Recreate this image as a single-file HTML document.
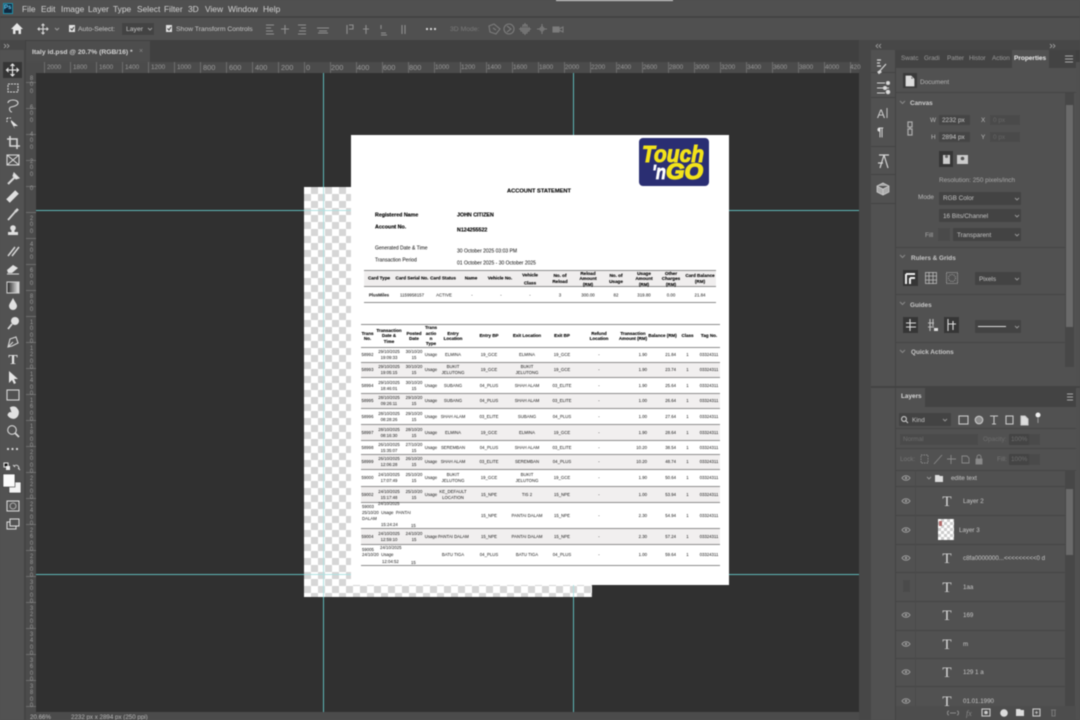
<!DOCTYPE html>
<html><head><meta charset="utf-8"><title>Photoshop</title>
<style>
html,body{margin:0;padding:0;background:#505050}
#w{position:relative;width:1080px;height:720px;overflow:hidden;background:#505050;font-family:"Liberation Sans",sans-serif;filter:blur(.4px)}
.b{position:absolute}
.t{position:absolute;white-space:nowrap;line-height:10px;color:#c4c4c4;font-size:6.4px;transform:translateY(1px)}
.mn{font-size:8.4px;color:#d2d2d2;top:2.5px}
.op{font-size:6.8px;top:24px;color:#c8c8c8}
.r{position:absolute;top:63px;font-size:6.4px;line-height:10px;color:#9a9a9a}
.v{position:absolute;left:28px;width:7px;text-align:center;font-size:6px;line-height:6.4px;color:#9a9a9a}
.sel{position:absolute;background:#434343;border-radius:1px}
.f{position:absolute;background:#454545}
.ln{position:absolute;left:896px;width:169px;height:1px;background:#454545}
.d{position:absolute;white-space:nowrap;line-height:10px;color:#000;font-size:5px;transform:translateY(1.5px)}
.db{font-weight:bold;color:#000;font-size:5.3px;-webkit-text-stroke:.12px #000}
.c{position:absolute;white-space:nowrap;transform:translate(-50%,calc(-50% + 1px));text-align:center;color:#111;font-size:4.4px;line-height:5.4px}
.h{font-weight:bold;color:#000;font-size:4.6px;-webkit-text-stroke:.1px #000}
table{position:absolute;left:361px;top:324px;width:359px;border-collapse:separate;border-spacing:0;table-layout:fixed;font-size:4.3px;line-height:6px;color:#111}
td,th{padding:0;text-align:center;vertical-align:middle;box-sizing:border-box;border-bottom:1px solid #8d8d8d;overflow:visible;white-space:nowrap;font-weight:normal}
th{font-weight:bold;color:#000;font-size:4.5px;line-height:5.4px;border-top:1px solid #8d8d8d;-webkit-text-stroke:.1px #000}
tr:nth-child(odd) td{background:#f1efef}
.a{text-align:right;padding-right:1px}
.o{position:absolute;white-space:nowrap;font-size:4.3px;line-height:6px;color:#111}
.ly{font-size:6.2px;color:#c8c8c8;left:963px}
</style></head><body>
<div id="w">

<!-- top chrome -->
<div class="b" style="left:556px;top:0;width:117px;height:1px;background:#ddd"></div>
<div class="b" style="left:0;top:16px;width:1080px;height:2px;background:#444"></div>
<div class="b" style="left:0;top:40px;width:1080px;height:22px;background:#404040"></div>
<div class="b" style="left:0;top:40px;width:25px;height:10px;background:#474747"></div>
<div class="b" style="left:859px;top:40px;width:221px;height:10px;background:#474747"></div>
<div class="b" style="left:859px;top:50px;width:12px;height:670px;background:#474747"></div>
<div class="b" style="left:26px;top:41px;width:124px;height:21px;background:#4d4d4d"></div>
<div class="b" style="left:0;top:50px;width:24px;height:670px;background:#525252"></div>
<div class="b" style="left:24px;top:50px;width:2px;height:670px;background:#444"></div>

<div class="b" style="left:3px;top:3px;width:8px;height:9px;background:#10293f;border:1px solid #1f8fa8"></div>
<div class="t" style="left:4px;top:2px;font-size:6px;font-weight:bold;color:#5fc6ee">Ps</div>
<div class="t mn" style="left:22px">File</div>
<div class="t mn" style="left:41px">Edit</div>
<div class="t mn" style="left:61px">Image</div>
<div class="t mn" style="left:88px">Layer</div>
<div class="t mn" style="left:113px">Type</div>
<div class="t mn" style="left:137px">Select</div>
<div class="t mn" style="left:164px">Filter</div>
<div class="t mn" style="left:188px">3D</div>
<div class="t mn" style="left:205px">View</div>
<div class="t mn" style="left:228px">Window</div>
<div class="t mn" style="left:263px">Help</div>

<!-- options bar -->
<div class="t op" style="left:78px">Auto-Select:</div>
<div class="sel" style="left:122px;top:23px;width:32px;height:12px"></div>
<div class="t op" style="left:126px">Layer</div>
<div class="t op" style="left:176px">Show Transform Controls</div>
<div class="t op" style="left:450px;color:#7a7a7a">3D Mode:</div>
<div class="t" style="left:32px;top:46.5px;font-size:6.8px;font-weight:bold;color:#d4d4d4">Italy id.psd @ 20.7% (RGB/16) *</div>
<div class="t" style="left:139px;top:46px;font-size:7px;color:#888">×</div>

<!-- rulers -->
<div class="b" style="left:36px;top:62px;width:823px;height:11px;background:#4b4b4b linear-gradient(to right,#6e6e6e 1px,transparent 1px) 8px 0/26px 100%"></div>
<div class="b" style="left:26px;top:62px;width:10px;height:658px;background:#4b4b4b linear-gradient(to bottom,#6e6e6e 1px,transparent 1px) 0 20px/100% 26px"></div>
<span class="r" style="left:47px">2000</span><span class="r" style="left:73px">1800</span><span class="r" style="left:99px">1600</span><span class="r" style="left:125px">1400</span><span class="r" style="left:151px">1200</span><span class="r" style="left:177px">1000</span><span class="r" style="left:203px;font-size:7.4px">800</span><span class="r" style="left:229px;font-size:7.4px">600</span><span class="r" style="left:255px;font-size:7.4px">400</span><span class="r" style="left:281px;font-size:7.4px">200</span><span class="r" style="left:306px;font-size:7.4px">0</span><span class="r" style="left:331px;font-size:7.4px">200</span><span class="r" style="left:357px;font-size:7.4px">400</span><span class="r" style="left:383px;font-size:7.4px">600</span><span class="r" style="left:409px;font-size:7.4px">800</span><span class="r" style="left:435px">1000</span><span class="r" style="left:461px">1200</span><span class="r" style="left:487px">1400</span><span class="r" style="left:513px">1600</span><span class="r" style="left:539px">1800</span><span class="r" style="left:565px">2000</span><span class="r" style="left:591px">2200</span><span class="r" style="left:617px">2400</span><span class="r" style="left:643px">2600</span><span class="r" style="left:669px">2800</span><span class="r" style="left:695px">3000</span><span class="r" style="left:721px">3200</span><span class="r" style="left:747px">3400</span><span class="r" style="left:773px">3600</span><span class="r" style="left:799px">3800</span><span class="r" style="left:825px">4000</span><span class="r" style="left:850px">420</span>
<div class="v" style="top:76px">8<br>0<br>0</div><div class="v" style="top:105px">6<br>0<br>0</div><div class="v" style="top:132px">4<br>0<br>0</div><div class="v" style="top:159px">2<br>0<br>0</div><div class="v" style="top:186px">0</div><div class="v" style="top:216px">2<br>0<br>0</div><div class="v" style="top:242px">4<br>0<br>0</div><div class="v" style="top:268px">6<br>0<br>0</div><div class="v" style="top:294px">8<br>0<br>0</div><div class="v" style="top:320px">1<br>0<br>0<br>0</div><div class="v" style="top:346px">1<br>2<br>0<br>0</div><div class="v" style="top:372px">1<br>4<br>0<br>0</div><div class="v" style="top:398px">1<br>6<br>0<br>0</div><div class="v" style="top:424px">1<br>8<br>0<br>0</div><div class="v" style="top:450px">2<br>0<br>0<br>0</div><div class="v" style="top:476px">2<br>2<br>0<br>0</div><div class="v" style="top:502px">2<br>4<br>0<br>0</div><div class="v" style="top:528px">2<br>6<br>0<br>0</div><div class="v" style="top:554px">2<br>8<br>0<br>0</div><div class="v" style="top:580px">3<br>0<br>0<br>0</div><div class="v" style="top:606px">3<br>2<br>0<br>0</div><div class="v" style="top:632px">3<br>4<br>0<br>0</div><div class="v" style="top:658px">3<br>6<br>0<br>0</div><div class="v" style="top:684px">3<br>8<br>0<br>0</div>

<!-- canvas -->
<div class="b" style="left:36px;top:73px;width:823px;height:639px;background:#303030"></div>
<!-- guides -->
<div class="b" style="left:323px;top:73px;width:1px;height:639px;background:#5fb8b8"></div>
<div class="b" style="left:573px;top:73px;width:1px;height:639px;background:#5fb8b8"></div>
<div class="b" style="left:36px;top:210px;width:823px;height:1px;background:#5fb8b8"></div>
<div class="b" style="left:36px;top:574px;width:823px;height:1px;background:#5fb8b8"></div>
<!-- transparent checker with pale guides on top -->
<div class="b" style="left:304px;top:187px;width:288px;height:410px;background:#fff conic-gradient(#d6d6d6 25%,#fff 0 50%,#d6d6d6 0 75%,#fff 0) 0 0/14px 14px"></div>
<div class="b" style="left:323px;top:187px;width:1px;height:410px;background:#b0e2e2"></div>
<div class="b" style="left:573px;top:585px;width:1px;height:12px;background:#b0e2e2"></div>
<div class="b" style="left:304px;top:210px;width:47px;height:1px;background:#b0e2e2"></div>
<div class="b" style="left:304px;top:574px;width:47px;height:1px;background:#b0e2e2"></div>
<!-- document -->
<div class="b" style="left:351px;top:135px;width:378px;height:450px;background:#fff"></div>

<svg class="b" style="left:639px;top:138px" width="70" height="48" viewBox="0 0 70 48">
<rect width="70" height="48" rx="4" fill="#2a2e72"/>
<text x="3" y="24" font-family="Liberation Sans" font-weight="bold" font-style="italic" font-size="23" fill="#f3e31a" stroke="#f3e31a" stroke-width="1" textLength="62" lengthAdjust="spacingAndGlyphs">Touch</text>
<text x="13" y="41" font-family="Liberation Sans" font-weight="bold" font-style="italic" font-size="20" fill="#fff" stroke="#fff" stroke-width=".7" textLength="14" lengthAdjust="spacingAndGlyphs">'n</text>
<text x="27" y="41" font-family="Liberation Sans" font-weight="bold" font-style="italic" font-size="22" fill="#f3e31a" stroke="#f3e31a" stroke-width="1.300" textLength="37" lengthAdjust="spacingAndGlyphs">GO</text>
</svg>

<div class="c h" style="left:539px;top:190.5px;font-size:5.7px">ACCOUNT STATEMENT</div>
<div class="d db" style="left:375px;top:209px">Registered Name</div>
<div class="d db" style="left:457px;top:209px">JOHN CITIZEN</div>
<div class="d db" style="left:375px;top:221px">Account No.</div>
<div class="d db" style="left:457px;top:224px">N124255522</div>
<div class="d" style="left:375px;top:242px">Generated Date &amp; Time</div>
<div class="d" style="left:457px;top:245px">30 October 2025 03:03 PM</div>
<div class="d" style="left:375px;top:254px">Transaction Period</div>
<div class="d" style="left:457px;top:257px">01 October 2025 - 30 October 2025</div>

<div class="b" style="left:364px;top:270px;width:352px;height:17px;background:#f0eeee;border-top:1px solid #8d8d8d;border-bottom:1px solid #8d8d8d;box-sizing:border-box"></div>
<div class="b" style="left:364px;top:302px;width:352px;height:1px;background:#8d8d8d"></div>
<div class="c h" style="left:379px;top:277px">Card Type</div>
<div class="c h" style="left:412px;top:277px">Card Serial No.</div>
<div class="c h" style="left:443px;top:277px">Card Status</div>
<div class="c h" style="left:471px;top:277px">Name</div>
<div class="c h" style="left:500px;top:277px">Vehicle No.</div>
<div class="c h" style="left:530px;top:278px;line-height:7.5px">Vehicle<br>Class</div>
<div class="c h" style="left:560px;top:278px;line-height:6px">No. of<br>Reload</div>
<div class="c h" style="left:588px;top:278px">Reload<br>Amount<br>(RM)</div>
<div class="c h" style="left:616px;top:278px;line-height:6px">No. of<br>Usage</div>
<div class="c h" style="left:644px;top:278px">Usage<br>Amount<br>(RM)</div>
<div class="c h" style="left:671px;top:278px">Other<br>Charges<br>(RM)</div>
<div class="c h" style="left:700px;top:278px;line-height:6px">Card Balance<br>(RM)</div>
<div class="c" style="left:379px;top:294px;font-weight:bold">PlusMiles</div>
<div class="c" style="left:412px;top:294px">1159958157</div>
<div class="c" style="left:444px;top:294px">ACTIVE</div>
<div class="c" style="left:472px;top:294px">-</div>
<div class="c" style="left:501px;top:294px">-</div>
<div class="c" style="left:530px;top:294px">-</div>
<div class="c" style="left:560px;top:294px">3</div>
<div class="c" style="left:588px;top:294px">300.00</div>
<div class="c" style="left:616px;top:294px">82</div>
<div class="c" style="left:644px;top:294px">319.80</div>
<div class="c" style="left:671px;top:294px">0.00</div>
<div class="c" style="left:700px;top:294px">21.84</div>

<table>
<colgroup><col style="width:13px"><col style="width:30px"><col style="width:20px"><col style="width:14px"><col style="width:30px"><col style="width:42px"><col style="width:34px"><col style="width:36px"><col style="width:38px"><col style="width:30px"><col style="width:29px"><col style="width:21px"><col style="width:22px"></colgroup>
<tr style="height:24px"><th>Trans<br>No.</th><th>Transaction<br>Date &amp;<br>Time</th><th>Posted<br>Date</th><th>Trans<br>actio<br>n<br>Type</th><th>Entry<br>Location</th><th>Entry BP</th><th>Exit Location</th><th>Exit BP</th><th>Refund<br>Location</th><th>Transaction<br>Amount (RM)</th><th>Balance (RM)</th><th>Class</th><th>Tag No.</th></tr>
<tr style="height:15px"><td>58992</td><td>29/10/2025<br>19:09:33</td><td>30/10/20<br>15</td><td>Usage</td><td>ELMINA</td><td>19_GCE</td><td>ELMINA</td><td>19_GCE</td><td>-</td><td class="a">1.90</td><td class="a">21.84</td><td>1</td><td>03324311</td></tr>
<tr style="height:15px"><td>58993</td><td>29/10/2025<br>19:05:15</td><td>30/10/20<br>15</td><td>Usage</td><td>BUKIT<br>JELUTONG</td><td>19_GCE</td><td>BUKIT<br>JELUTONG</td><td>19_GCE</td><td>-</td><td class="a">1.90</td><td class="a">23.74</td><td>1</td><td>03324311</td></tr>
<tr style="height:16px"><td>58994</td><td>29/10/2025<br>18:46:01</td><td>30/10/20<br>15</td><td>Usage</td><td>SUBANG</td><td>04_PLUS</td><td>SHAH ALAM</td><td>03_ELITE</td><td>-</td><td class="a">1.90</td><td class="a">25.64</td><td>1</td><td>03324311</td></tr>
<tr style="height:15px"><td>58995</td><td>28/10/2025<br>09:26:11</td><td>29/10/20<br>15</td><td>Usage</td><td>SUBANG</td><td>04_PLUS</td><td>SHAH ALAM</td><td>03_ELITE</td><td>-</td><td class="a">1.00</td><td class="a">26.64</td><td>1</td><td>03324311</td></tr>
<tr style="height:16px"><td>58996</td><td>28/10/2025<br>08:28:26</td><td>29/10/20<br>15</td><td>Usage</td><td>SHAH ALAM</td><td>03_ELITE</td><td>SUBANG</td><td>04_PLUS</td><td>-</td><td class="a">1.00</td><td class="a">27.64</td><td>1</td><td>03324311</td></tr>
<tr style="height:16px"><td>58997</td><td>28/10/2025<br>08:16:30</td><td>28/10/20<br>15</td><td>Usage</td><td>ELMINA</td><td>19_GCE</td><td>ELMINA</td><td>19_GCE</td><td>-</td><td class="a">1.90</td><td class="a">28.64</td><td>1</td><td>03324311</td></tr>
<tr style="height:14px"><td>58998</td><td>26/10/2025<br>15:35:07</td><td>27/10/20<br>15</td><td>Usage</td><td>SEREMBAN</td><td>04_PLUS</td><td>SHAH ALAM</td><td>03_ELITE</td><td>-</td><td class="a">10.20</td><td class="a">38.54</td><td>1</td><td>03324311</td></tr>
<tr style="height:15px"><td>58999</td><td>26/10/2025<br>12:06:28</td><td>26/10/20<br>15</td><td>Usage</td><td>SHAH ALAM</td><td>03_ELITE</td><td>SEREMBAN</td><td>04_PLUS</td><td>-</td><td class="a">10.20</td><td class="a">48.74</td><td>1</td><td>03324311</td></tr>
<tr style="height:17px"><td>59000</td><td>24/10/2025<br>17:07:49</td><td>25/10/20<br>15</td><td>Usage</td><td>BUKIT<br>JELUTONG</td><td>19_GCE</td><td>BUKIT<br>JELUTONG</td><td>19_GCE</td><td>-</td><td class="a">1.90</td><td class="a">50.64</td><td>1</td><td>03324311</td></tr>
<tr style="height:16px"><td>59002</td><td>24/10/2025<br>15:17:48</td><td>25/10/20<br>15</td><td>Usage</td><td>KE_DEFAULT<br>LOCATION</td><td>15_NPE</td><td>TIS 2</td><td>15_NPE</td><td>-</td><td class="a">1.00</td><td class="a">53.94</td><td>1</td><td>03324311</td></tr>
<tr style="height:26px"><td colspan="5"></td><td>15_NPE</td><td>PANTAI DALAM</td><td>15_NPE</td><td>-</td><td class="a">2.30</td><td class="a">54.94</td><td>1</td><td>03324311</td></tr>
<tr style="height:16px"><td>59004</td><td>24/10/2025<br>12:59:10</td><td>24/10/20<br>15</td><td>Usage</td><td>PANTAI DALAM</td><td>15_NPE</td><td>PANTAI DALAM</td><td>15_NPE</td><td>-</td><td class="a">2.30</td><td class="a">57.24</td><td>1</td><td>03324311</td></tr>
<tr style="height:21px"><td colspan="4"></td><td>BATU TIGA</td><td>04_PLUS</td><td>BATU TIGA</td><td>04_PLUS</td><td>-</td><td class="a">1.00</td><td class="a">59.64</td><td>1</td><td>03324311</td></tr>
</table>
<div class="o" style="left:362px;top:504px">59003</div>
<div class="o" style="left:378px;top:501px">24/10/2025</div>
<div class="o" style="left:362px;top:510px">25/10/20 &nbsp;Usage &nbsp;PANTAI</div>
<div class="o" style="left:362px;top:516px">DALAM</div>
<div class="o" style="left:381px;top:522px">15:24:24</div>
<div class="o" style="left:411px;top:523px">15</div>
<div class="o" style="left:362px;top:547px">59005</div>
<div class="o" style="left:380px;top:545px">24/10/2025</div>
<div class="o" style="left:362px;top:552px">24/10/20 &nbsp;Usage</div>
<div class="o" style="left:382px;top:559px">12:04:52</div>
<div class="o" style="left:411px;top:560px">15</div>

<!-- status -->
<div class="b" style="left:26px;top:712px;width:833px;height:8px;background:#4b4b4b"></div>
<div class="t" style="left:30px;top:712px;font-size:6.2px;color:#bbb">20.66%</div>
<div class="t" style="left:71px;top:712px;font-size:6.2px;color:#bbb">2232 px x 2894 px (250 ppi)</div>

<!-- right strip -->
<div class="b" style="left:871px;top:50px;width:24px;height:670px;background:#515151"></div>
<div class="b" style="left:895px;top:50px;width:181px;height:336px;background:#515151"></div>
<div class="b" style="left:895px;top:50px;width:1px;height:670px;background:#434343"></div>
<div class="b" style="left:895px;top:50px;width:181px;height:18px;background:#434343"></div>
<div class="b" style="left:1012px;top:50px;width:37px;height:18px;background:#515151"></div>
<div class="b" style="left:871px;top:72px;width:24px;height:1px;background:#444"></div>
<div class="b" style="left:871px;top:97px;width:24px;height:1px;background:#444"></div>
<div class="b" style="left:871px;top:146px;width:24px;height:1px;background:#444"></div>
<div class="b" style="left:871px;top:174px;width:24px;height:1px;background:#444"></div>
<div class="b" style="left:871px;top:203px;width:24px;height:1px;background:#444"></div>
<div class="t" style="left:901px;top:53px;color:#9c9c9c">Swatc</div>
<div class="t" style="left:924px;top:53px;color:#9c9c9c">Gradi</div>
<div class="t" style="left:947px;top:53px;color:#9c9c9c">Patter</div>
<div class="t" style="left:969px;top:53px;color:#9c9c9c">Histor</div>
<div class="t" style="left:992px;top:53px;color:#9c9c9c">Action</div>
<div class="t" style="left:1014px;top:53px;color:#eee;font-weight:bold;font-size:6.5px">Properties</div>
<div class="b" style="left:903px;top:73px;width:14px;height:15px;background:#3a3a3a"></div>
<div class="t" style="left:920px;top:77px;color:#b4b4b4">Document</div>
<div class="ln" style="top:92px;width:180px"></div>
<div class="t" style="left:910px;top:98px;font-weight:bold;color:#d0d0d0">Canvas</div>
<div class="t" style="left:930px;top:115px;color:#bbb">W</div>
<div class="f" style="left:939px;top:115px;width:31px;height:10px"></div>
<div class="t" style="left:942px;top:115px;color:#ccc">2232 px</div>
<div class="t" style="left:981px;top:115px;color:#bbb">X</div>
<div class="f" style="left:990px;top:115px;width:30px;height:10px;background:#4a4a4a"></div>
<div class="t" style="left:993px;top:115px;color:#666">0 px</div>
<div class="t" style="left:931px;top:132px;color:#bbb">H</div>
<div class="f" style="left:939px;top:132px;width:31px;height:10px"></div>
<div class="t" style="left:942px;top:132px;color:#ccc">2894 px</div>
<div class="t" style="left:981px;top:132px;color:#bbb">Y</div>
<div class="f" style="left:990px;top:132px;width:30px;height:10px;background:#4a4a4a"></div>
<div class="t" style="left:993px;top:132px;color:#666">0 px</div>
<div class="b" style="left:939px;top:151px;width:14px;height:16px;background:#363636"></div>
<div class="t" style="left:939px;top:175px;color:#aaa">Resolution: 250 pixels/inch</div>
<div class="t" style="left:918px;top:192px;color:#bbb">Mode</div>
<div class="sel" style="left:939px;top:192px;width:82px;height:13px"></div>
<div class="t" style="left:943px;top:193px;color:#c4c4c4">RGB Color</div>
<div class="sel" style="left:939px;top:209px;width:82px;height:13px"></div>
<div class="t" style="left:943px;top:211px;color:#c4c4c4">16 Bits/Channel</div>
<div class="t" style="left:925px;top:230px;color:#aaa">Fill</div>
<div class="b" style="left:938px;top:228px;width:12px;height:13px;background:#4a4a4a"></div>
<div class="sel" style="left:953px;top:228px;width:68px;height:13px"></div>
<div class="t" style="left:957px;top:230px;color:#c4c4c4">Transparent</div>
<div class="ln" style="top:247px"></div>
<div class="t" style="left:911px;top:253px;font-weight:bold;color:#c8c8c8">Rulers &amp; Grids</div>
<div class="b" style="left:903px;top:270px;width:15px;height:16px;background:#363636"></div>
<div class="sel" style="left:975px;top:272px;width:46px;height:13px"></div>
<div class="t" style="left:979px;top:274px;color:#c4c4c4">Pixels</div>
<div class="ln" style="top:294px"></div>
<div class="t" style="left:910px;top:300px;font-weight:bold;color:#c8c8c8">Guides</div>
<div class="b" style="left:903px;top:317px;width:15px;height:16px;background:#363636"></div>
<div class="b" style="left:944px;top:317px;width:15px;height:16px;background:#363636"></div>
<div class="sel" style="left:975px;top:320px;width:46px;height:13px"></div>
<div class="b" style="left:978px;top:326px;width:28px;height:1px;background:#ddd"></div>
<div class="ln" style="top:342px"></div>
<div class="t" style="left:911px;top:347px;font-weight:bold;color:#c8c8c8">Quick Actions</div>
<!-- props scrollbar -->
<div class="b" style="left:1065px;top:93px;width:9px;height:274px;background:#474747"></div>
<div class="b" style="left:1066px;top:105px;width:7px;height:222px;background:#6a6a6a"></div>

<!-- layers panel -->
<div class="b" style="left:871px;top:386px;width:209px;height:2px;background:#434343"></div>
<div class="b" style="left:895px;top:388px;width:181px;height:332px;background:#515151"></div>
<div class="b" style="left:895px;top:388px;width:1px;height:332px;background:#434343"></div>
<div class="b" style="left:925px;top:388px;width:151px;height:19px;background:#434343"></div>
<div class="t" style="left:901px;top:391px;font-weight:bold;color:#d8d8d8">Layers</div>
<div class="sel" style="left:899px;top:413px;width:52px;height:13px"></div>
<div class="t" style="left:912px;top:415px;color:#c4c4c4">Kind</div>
<div class="ln" style="top:428px;width:180px"></div>
<div class="b" style="left:900px;top:434px;width:78px;height:11px;background:#4a4a4a"></div>
<div class="t" style="left:903px;top:434px;color:#6e6e6e">Normal</div>
<div class="t" style="left:983px;top:434px;color:#6e6e6e">Opacity:</div>
<div class="b" style="left:1009px;top:434px;width:31px;height:11px;background:#4a4a4a"></div>
<div class="b" style="left:1009px;top:434px;width:20px;height:11px;background:#444"></div>
<div class="t" style="left:1011px;top:434px;color:#6e6e6e">100%</div>
<div class="ln" style="top:448px;width:180px"></div>
<div class="t" style="left:900px;top:454px;color:#777">Lock:</div>
<div class="t" style="left:997px;top:454px;color:#777">Fill:</div>
<div class="b" style="left:1009px;top:454px;width:31px;height:11px;background:#4a4a4a"></div>
<div class="b" style="left:1009px;top:454px;width:20px;height:11px;background:#444"></div>
<div class="t" style="left:1011px;top:454px;color:#6e6e6e">100%</div>
<div class="ln" style="top:470px;width:180px"></div>
<div class="ln" style="top:486px"></div><div class="ln" style="top:515px"></div><div class="ln" style="top:544px"></div><div class="ln" style="top:572px"></div><div class="ln" style="top:601px"></div><div class="ln" style="top:630px"></div><div class="ln" style="top:658px"></div><div class="ln" style="top:686px"></div>
<div class="b" style="left:915px;top:470px;width:1px;height:236px;background:#4a4a4a"></div>
<div class="b" style="left:903px;top:580px;width:7px;height:12px;background:#4a4a4a"></div>
<div class="t" style="left:951px;top:473px;color:#c8c8c8">edite text</div>
<div class="t ly" style="top:496px">Layer 2</div>
<div class="t ly" style="left:959px;top:525px">Layer 3</div>
<div class="t ly" style="top:553px">c8fa0000000...&lt;&lt;&lt;&lt;&lt;&lt;&lt;&lt;&lt;0 d</div>
<div class="t ly" style="top:582px">1aa</div>
<div class="t ly" style="top:610px">169</div>
<div class="t ly" style="top:639px">m</div>
<div class="t ly" style="top:667px">129 1 a</div>
<div class="t ly" style="top:696px">01.01.1990</div>
<div class="b" style="left:938px;top:519px;width:16px;height:21px;background:#fff conic-gradient(#ccc 25%,#fff 0 50%,#ccc 0 75%,#fff 0) 0 0/6px 6px"></div>
<div class="b" style="left:939px;top:521px;width:3px;height:5px;background:#b06a6a"></div>
<div class="b" style="left:1065px;top:470px;width:10px;height:236px;background:#474747"></div>
<div class="b" style="left:1066px;top:489px;width:7px;height:66px;background:#6a6a6a"></div>
<div class="b" style="left:896px;top:706px;width:180px;height:14px;background:#4d4d4d"></div>

<!-- icons -->
<svg class="b" style="left:0;top:0" width="1080" height="720" viewBox="0 0 1080 720" fill="none" stroke="#d6d6d6" stroke-width="1.1">
<rect x="3" y="62" width="19" height="16" fill="#363636" stroke="none"/>
<!-- options -->
<path d="M11 29L17 23L23 29H21V34H18.500V30.500H15.500V34H13V29Z" fill="#e6e6e6" stroke="none"/>
<g transform="translate(43 29)"><path d="M0-5V5M-5 0H5M-1.500-3.500L0-5L1.500-3.500M-1.500 3.500L0 5L1.500 3.500M-3.500-1.500L-5 0L-3.500 1.500M3.500-1.500L5 0L3.500 1.500"/></g>
<path d="M55 28L57 30L59 28" stroke="#999"/>
<rect x="69" y="25" width="6" height="7" fill="#e0e0e0" stroke="none"/><path d="M70.500 28.500L72 30L74 27" stroke="#444"/>
<rect x="166" y="25" width="6" height="7" fill="#e0e0e0" stroke="none"/><path d="M167.500 28.500L169 30L171 27" stroke="#444"/>
<path d="M148 28L150 30L152 28" stroke="#999"/>
<path d="M266 25H274M266 28H271M266 31H273M266 34H274M281 29H289M285 25V34M298 25H306M301 28H306M299 31H306M298 34H306M317 28H329M319 31H327M318 33H328" stroke="#8f8f8f"/>
<path d="M347 25V34M349 25H353V29H349M363 29H369M366 25V34M381 33H386M381 25V29M381 35H387M402 25V34M405 25V34" stroke="#8f8f8f"/>
<circle cx="427" cy="29" r="1.100" fill="#ddd" stroke="none"/><circle cx="431" cy="29" r="1.100" fill="#ddd" stroke="none"/><circle cx="435" cy="29" r="1.100" fill="#ddd" stroke="none"/>
<g stroke="#7c7c7c"><path d="M489 26L494 24L500 29L496 34L490 32ZM493 28L496 30"/><circle cx="509" cy="29" r="5"/><path d="M507 26L511 29L507 32"/><path d="M525 23V35M519 29H531M523 25H527V33H523ZM521 27V31H529V27"/><path d="M542 24V34M537 29H547"/><circle cx="542" cy="29" r="2"/><rect x="553" y="27" width="6" height="5" fill="#7c7c7c"/><path d="M559 29L563 27V32L559 30"/></g>
<!-- collapse -->
<path d="M4 44L6 46L4 48M7 44L9 46L7 48M878 44L876 46L878 48M881 44L879 46L881 48M1050 44L1052 46L1050 48M1053 44L1055 46L1053 48" stroke="#aaa" stroke-width=".8"/>
<!-- left tools -->
<g transform="translate(12.500 70)"><path d="M0-6V6M-6 0H6M-2-4L0-6L2-4M-2 4L0 6L2 4M-4-2L-6 0L-4 2M4-2L6 0L4 2" stroke="#eee"/></g>
<rect x="8" y="84" width="10" height="8" stroke-dasharray="2 1"/>
<path d="M8 103C8 99 18 99 18 103C18 106 11 107 11 107M11 107C8 108 10 112 12 112" />
<path d="M7 118H12M7 118V122" stroke-dasharray="1.500 1"/><path d="M11 120L18 126L14 126L15 129L11 122Z" fill="#e4e4e4" stroke="none"/>
<path d="M10 136V146H20M7 139H17V149" stroke-width="1.600"/>
<rect x="7" y="155" width="12" height="10"/><path d="M7 155L19 165M19 155L7 165"/>
<path d="M8 184L15 177" stroke-width="2"/><path d="M14 173L19 178L16 179L13 176Z" fill="#e4e4e4"/>
<path d="M8 201L17 192" stroke-width="5" stroke="#e0e0e0"/>
<path d="M8 220L15 212" stroke-width="1.800"/><path d="M15 212L18 209" stroke-width="2.600"/>
<circle cx="13" cy="228" r="2.800" fill="#e0e0e0" stroke="none"/><rect x="8" y="232" width="10" height="3" fill="#e0e0e0" stroke="none"/><rect x="11.500" y="230" width="3" height="3" fill="#e0e0e0" stroke="none"/>
<path d="M8 256L15 247M12 256L19 247" stroke-width="1.500"/>
<path d="M7 270L13 265L18 268L12 273H8Z" fill="#e0e0e0" stroke="none"/><path d="M7 274H19"/>
<defs><linearGradient id="gr"><stop offset="0" stop-color="#222"/><stop offset="1" stop-color="#eee"/></linearGradient></defs>
<rect x="7" y="282" width="12" height="11" fill="url(#gr)" stroke="#ccc"/>
<path d="M13 298C15 302 17 304 17 306A4 4 0 0 1 9 306C9 304 11 302 13 298Z" fill="#e0e0e0" stroke="none"/>
<circle cx="15" cy="321" r="4" fill="#e0e0e0" stroke="none"/><path d="M12 324L8 329" stroke-width="1.800"/>
<path d="M8 347L10 339L16 337L18 343L12 346ZM8 347L13 342"/>
<text x="13" y="364" text-anchor="middle" font-family="Liberation Serif" font-size="14" fill="#e4e4e4" stroke="none" font-weight="bold">T</text>
<path d="M9 371V383L12 380L14 384L16 383L14 379H18Z" fill="#e4e4e4" stroke="none"/>
<rect x="7" y="390" width="12" height="10"/>
<path d="M10 408C13 406 16 407 17 409C19 411 19 416 15 418C12 419 9 417 8 415C9 412 11 412 12 414" fill="#e0e0e0" stroke="#e0e0e0"/>
<circle cx="12" cy="430" r="4.300"/><path d="M15 433L19 437" stroke-width="1.800"/>
<circle cx="8" cy="449" r="1.100" fill="#ddd" stroke="none"/><circle cx="12.500" cy="449" r="1.100" fill="#ddd" stroke="none"/><circle cx="17" cy="449" r="1.100" fill="#ddd" stroke="none"/>
<rect x="4" y="463" width="4" height="4" fill="#111" stroke="#ddd"/><rect x="6" y="466" width="4" height="4" fill="#eee" stroke="none"/>
<path d="M14 466C17 464 19 466 19 469M13 465L15 467M18 468L20 470" stroke-width=".9"/>
<rect x="9" y="482" width="12" height="11" fill="#f4f4f4" stroke="#333" stroke-width=".6"/>
<rect x="3" y="474" width="12" height="13" fill="#fbfbfb" stroke="#333" stroke-width=".6"/>
<rect x="7" y="501" width="12" height="10"/><circle cx="13" cy="506" r="3" stroke="#aaa"/>
<rect x="7" y="522" width="9" height="7"/><rect x="10" y="519" width="9" height="7" fill="#525252"/>
<!-- right strip icons -->
<path d="M877 60H881M877 63H880M877 66H881M878 73L886 64" stroke-width="1.200"/><path d="M878 73L881 71" stroke-width="3"/>
<path d="M877 83H885M877 88H889M877 93H885"/><circle cx="888" cy="83" r="1.500" fill="#ddd"/><circle cx="885" cy="88" r="1.500" fill="#ddd"/><circle cx="888" cy="92" r="1.700" fill="#ddd"/>
<text x="877" y="118" font-family="Liberation Sans" font-size="12" fill="#ccc" stroke="none">A</text><path d="M887 108V118" stroke="#bbb"/>
<text x="877" y="136" font-family="Liberation Sans" font-size="12" font-weight="bold" fill="#ddd" stroke="none">¶</text>
<path d="M879 155H889M884 155L880 168M884 155L888 168M878 163H883" stroke-width="1.200"/>
<path d="M883 183L889 186V192L883 195L877 192V186ZM877 186L883 189L889 186M883 189V195" fill="#aaa" stroke="#ccc" stroke-width=".8"/>
<!-- properties -->
<path d="M1065 56H1073M1065 59H1073M1065 62H1073" stroke="#aaa"/>
<path d="M906 76H911L914 79V86H906ZM911 76V79H914" fill="#ddd" stroke="#ddd" stroke-width=".8"/>
<path d="M900 101L902.500 103.500L905 101M900 255L902.500 257.500L905 255M900 302L902.500 304.500L905 302M900 350L902.500 352.500L905 350" stroke="#888"/>
<path d="M908 122H912V127H908ZM908 129H912V135H908ZM910 127V129" stroke="#aaa" stroke-width="1.300"/>
<rect x="943" y="155" width="7" height="9" fill="#ccc" stroke="none"/><circle cx="946.500" cy="156.500" r="1.500" fill="#666" stroke="none"/>
<rect x="957" y="155" width="11" height="9" fill="#ccc" stroke="none"/><circle cx="962.500" cy="158.500" r="1.800" fill="#555" stroke="none"/>
<path d="M1015 198L1017 200L1019 198M1015 215L1017 217L1019 215M1015 234L1017 236L1019 234M1015 278L1017 280L1019 278M1015 326L1017 328L1019 326M943 419L945 421L947 419" stroke="#999" stroke-width=".9"/>
<path d="M906 274H915M906 274V284M910 278H915M910 278V284" stroke="#eee" stroke-width="2"/>
<rect x="925.500" y="272.500" width="11" height="11" stroke="#bbb" stroke-width=".8"/><path d="M929 272V284M933 272V284M925 276H937M925 280H937" stroke="#bbb" stroke-width=".8"/>
<rect x="946.500" y="272.500" width="11" height="11" stroke="#aaa" stroke-dasharray="1 1"/><circle cx="952" cy="278" r="3.500" stroke="#999" stroke-dasharray="1 1"/>
<path d="M906 323H916M906 327H916M910 319V331" stroke="#ddd"/>
<path d="M928 323H934M928 327H934M930 319V331M933 319V326" stroke="#bbb"/><rect x="934" y="328" width="4" height="3" fill="#ddd" stroke="none"/>
<path d="M948 319V331M948 324H956M953 321V330" stroke="#ddd"/>
<path d="M1067 394H1073M1067 397H1073M1067 400H1073" stroke="#aaa"/>
<!-- layers icons -->
<circle cx="904" cy="419" r="2.400" stroke="#ccc"/><path d="M906 421L908 423" stroke="#ccc"/>
<g stroke="#c8c8c8"><rect x="959" y="416" width="9" height="8"/><circle cx="979" cy="420" r="3.800" fill="#c8c8c8" fill-opacity=".5"/><path d="M990 416H998M994 416V424M992 424H996"/><rect x="1006" y="416" width="7" height="8"/><path d="M1021 416H1025L1028 419V425H1021Z" fill="#ddd"/></g>
<circle cx="1038" cy="415" r="2.500" fill="#eee" stroke="none"/><path d="M1038 418V423" stroke="#999"/>
<g stroke="#8a8a8a" stroke-width=".9"><rect x="921" y="455" width="7" height="8" stroke-dasharray="1.500 1"/><path d="M934 464L942 455M951 455V464M947 459H956M962 456V463H969V458L967 456Z"/><rect x="976" y="459" width="6" height="5" fill="#8a8a8a"/><path d="M977 459V457A2 2 0 0 1 981 457V459"/></g>
<g stroke="#9a9a9a" fill="none"><path d="M902 478C904 475 908 475 910 478C908 481 904 481 902 478Z"/><path d="M902 501C904 498 908 498 910 501C908 504 904 504 902 501Z"/><path d="M902 530C904 527 908 527 910 530C908 533 904 533 902 530Z"/><path d="M902 558C904 555 908 555 910 558C908 561 904 561 902 558Z"/><path d="M902 615C904 612 908 612 910 615C908 618 904 618 902 615Z"/><path d="M902 644C904 641 908 641 910 644C908 647 904 647 902 644Z"/><path d="M902 672C904 669 908 669 910 672C908 675 904 675 902 672Z"/><path d="M902 701C904 698 908 698 910 701C908 704 904 704 902 701Z"/></g>
<g fill="#9a9a9a" stroke="none"><circle cx="906" cy="478" r="1.200"/><circle cx="906" cy="501" r="1.200"/><circle cx="906" cy="530" r="1.200"/><circle cx="906" cy="558" r="1.200"/><circle cx="906" cy="615" r="1.200"/><circle cx="906" cy="644" r="1.200"/><circle cx="906" cy="672" r="1.200"/><circle cx="906" cy="701" r="1.200"/></g>
<path d="M927 477L929 479L931 477" stroke="#999" stroke-width=".9"/>
<path d="M935 475H939L940 476H943V482H935Z" fill="#ddd" stroke="none"/>
<g font-family="Liberation Serif" font-size="15" fill="#d8d8d8" stroke="none" text-anchor="middle"><text x="947" y="506">T</text><text x="947" y="563">T</text><text x="947" y="592">T</text><text x="947" y="620">T</text><text x="947" y="649">T</text><text x="947" y="677">T</text><text x="947" y="706">T</text></g>
<g stroke="#8a8a8a"><path d="M950 713H956M949 711C947 711 947 715 949 715M957 711C959 711 959 715 957 715"/></g>
<text x="966" y="716" font-family="Liberation Serif" font-style="italic" font-size="8" fill="#8a8a8a" stroke="none">fx</text>
<rect x="982" y="709" width="8" height="7" stroke="#ccc"/><circle cx="986" cy="712.500" r="1.800" fill="#ccc" stroke="none"/>
<circle cx="1004" cy="713" r="3.800" fill="#ddd" stroke="none"/>
<path d="M1016 709H1020L1021 710H1024V716H1016Z" fill="#ddd" stroke="none"/>
<rect x="1033" y="709" width="7" height="7" stroke="#ccc"/><path d="M1035 712.500H1038M1036.500 711V714" stroke="#ccc" stroke-width=".8"/>
<path d="M1051 710H1056M1052 710V716H1055V710" stroke="#777"/>
</svg>
</div>
</body></html>
